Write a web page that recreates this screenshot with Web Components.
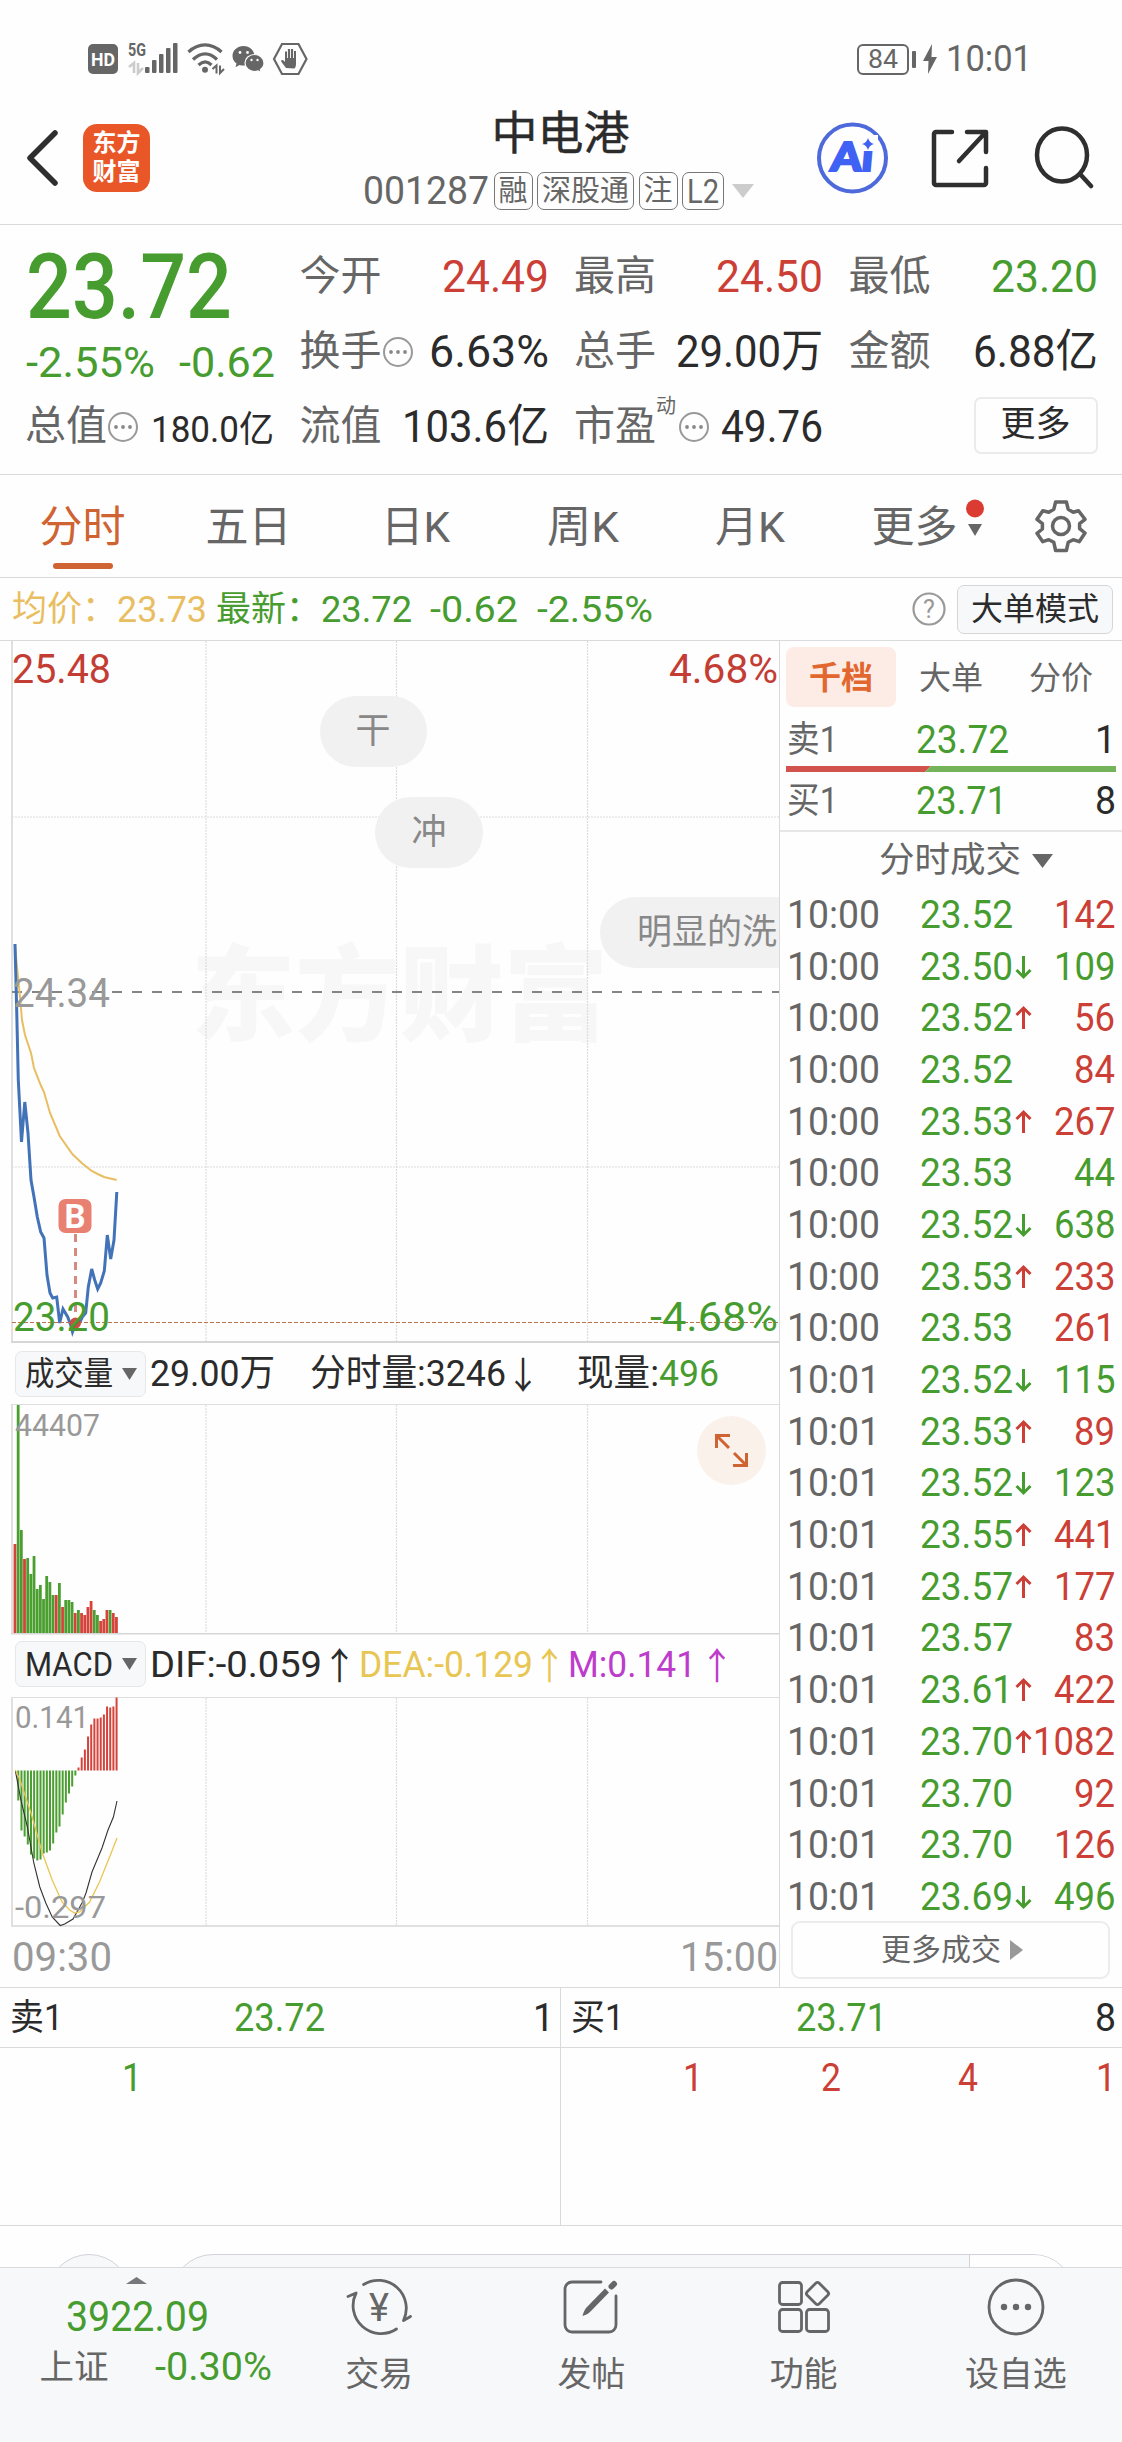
<!DOCTYPE html>
<html lang="zh-CN">
<head>
<meta charset="UTF-8">
<meta name="viewport" content="width=device-width, initial-scale=1">
<title>中电港 001287</title>
<style>
  :root {
    --up: #cb3f36;
    --down: #479c2f;
    --text: #2b2b2b;
    --muted: #666;
    --faint: #999;
    --brand: #cf6332;
    --avg: #e9be62;
    --line: #d9dadb;
    --panel: #f7f8fa;
  }
  body {
    margin: 0;
    width: 1122px;
    background: #fefefe;
    color: var(--text);
    font-family: Roboto, "Noto Sans CJK SC", sans-serif;
    line-height: 1;
  }
</style>
</head>
<body>
<stock-page></stock-page>

<script>
// Text squeezed to a fixed advance width, keeps the digits condensed
class FitText extends HTMLElement {
  connectedCallback() {
    if (this.shadowRoot) return;
    this.attachShadow({ mode: 'open' });
    this.shadowRoot.innerHTML = `
      <style>
        :host { display: inline-block; flex: none; white-space: nowrap; line-height: 1; }
        span { display: inline-block; transform-origin: 0 50%; }
      </style>
      <span><slot></slot></span>
    `;
    const target = Number(this.getAttribute('w'));
    const span = this.shadowRoot.querySelector('span');
    const natural = span.getBoundingClientRect().width;
    this.style.width = `${target}px`;
    if (natural) span.style.transform = `scaleX(${target / natural})`;
  }
}
customElements.define('fit-text', FitText);

// Shared base: every block only supplies its own template
class Block extends HTMLElement {
  connectedCallback() {
    if (this.shadowRoot) return;
    this.attachShadow({ mode: 'open' });
    this.shadowRoot.innerHTML = `
      <style>
        :host { display: block; box-sizing: border-box; }
        * { box-sizing: border-box; }
        svg { display: block; flex: none; }
        .up { color: var(--up); }
        .down { color: var(--down); }
      </style>
      ${this.render()}
    `;
  }
}

class MoreDot extends Block {
  render() {
    return `
      <style>:host { width: 30px; flex: none; }</style>
      <svg width="30" height="32" viewBox="0 0 30 32">
        <circle cx="15" cy="16" r="14" fill="none" stroke="#999" stroke-width="2"/>
        <g fill="#888"><circle cx="8" cy="16" r="1.9"/><circle cx="15" cy="16" r="1.9"/><circle cx="22" cy="16" r="1.9"/></g>
      </svg>
    `;
  }
}
customElements.define('more-dot', MoreDot);

class StatusBar extends Block {
  render() {
    return `
      <style>
        :host { height: 106px; padding: 38px 90px 0 84px; display: flex; justify-content: space-between; color: var(--muted); }
        .right { display: flex; align-items: center; height: 42px; }
        .battery { width: 52px; height: 31px; border: 2.5px solid #666; border-radius: 6px; display: grid; place-items: center; font-size: 26px; }
        .nub { width: 4px; height: 17px; background: #666; border-radius: 1px; margin: 0 7px 0 3px; }
        .time { font-size: 36px; margin-left: 9px; }
      </style>
      <svg width="230" height="42" viewBox="84 38 230 42" fill="#666">
        <rect x="88" y="44" width="30" height="30" rx="5"/>
        <text x="91" y="66" font-size="19" font-weight="700" fill="#fff" textLength="24" lengthAdjust="spacingAndGlyphs">HD</text>
        <text x="128" y="56" font-size="18" font-weight="700" textLength="18" lengthAdjust="spacingAndGlyphs">5G</text>
        <path d="M129 67l5-4v10M138 63v10l5-5" fill="none" stroke="#ccc" stroke-width="2.6"/>
        <g><rect x="145" y="67" width="4.5" height="6" rx="1"/><rect x="152" y="60" width="4.5" height="13" rx="1"/><rect x="159" y="54" width="4.5" height="19" rx="1"/><rect x="166" y="48" width="4.5" height="25" rx="1"/><rect x="173" y="43" width="4.5" height="30" rx="1"/></g>
        <g fill="none" stroke="#666" stroke-width="3.2"><path d="M188.500 52c10-9.500 23-9.500 33 0"/><path d="M193 59.500c8-7.500 16.500-7.500 24 0"/><path d="M198.500 65c4.500-4 9-4 13 0"/></g>
        <circle cx="205" cy="69.700" r="3"/>
        <path d="M212.500 69l4-3.500v8M220 65.500v7.500l4-4" fill="none" stroke="#666" stroke-width="2"/>
        <path d="M243.500 46c-6.200 0-11 4.400-11 10 0 3.200 1.500 5.800 4 7.600l-1 3.600 4-2.200c1.300.4 2.600.6 4 .6 6.300 0 11-4.300 11-9.600S249.800 46 243.500 46z"/>
        <path d="M254.500 54.500c-5.300 0-9.500 3.800-9.500 8.500s4.200 8.500 9.500 8.500c1.300 0 2.400-.2 3.500-.6l3.300 1.600-.9-3c2.300-1.600 3.600-3.900 3.600-6.500 0-4.700-4.200-8.500-9.500-8.500z" stroke="#fefefe" stroke-width="1.200"/>
        <g fill="#fefefe"><circle cx="240" cy="52.500" r="1.400"/><circle cx="247.500" cy="52.500" r="1.400"/><circle cx="251.500" cy="60" r="1.200"/><circle cx="257.500" cy="60" r="1.200"/></g>
        <path d="M274 59l8-15h16.500l8 15-8 15H282z" fill="none" stroke="#666" stroke-width="2.200"/>
        <path d="M286 68c-2-3-4-5-5-7 .6-1.500 2-1.200 4 1V51.500h2V58h.9v-9h2.200v9h.9v-9h2.100v9h.9v-7h2v13c0 2-.7 3.500-1.500 4.500z"/>
      </svg>
      <div class="right">
        <div class="battery"><fit-text w="30">84</fit-text></div>
        <div class="nub"></div>
        <svg width="14" height="30" viewBox="0 0 14 30" fill="#666"><path d="M9 0L0 17h5.500L5 30l9-17H8.500z"/></svg>
        <fit-text class="time" w="86">10:01</fit-text>
      </div>
    `;
  }
}
customElements.define('status-bar', StatusBar);

class QuoteHeader extends Block {
  render() {
    return `
      <style>
        :host { height: 119px; display: grid; grid-template-columns: 363px 390px 1fr; border-bottom: 1px solid var(--line); }
        .left, .right { display: flex; align-items: center; height: 104px; }
        .left { padding-left: 26px; }
        .logo { width: 67px; height: 68px; margin-left: 24px; border-radius: 14px; background: #e95728; color: #fff; display: grid; place-content: center; gap: 5px; font-size: 24px; font-weight: 700; line-height: 24px; padding-bottom: 1px; }
        h1 { margin: 2px 0 0 5px; font-size: 46px; line-height: 50px; font-weight: 400; text-align: center; -webkit-text-stroke: .4px currentColor; }
        .sub { display: flex; align-items: center; gap: 4.500px; margin-top: 14px; font-size: 38px; color: var(--muted); }
        .tag { height: 38px; border: 1px solid #777; border-radius: 7px; padding: 0 4px; display: flex; align-items: center; font-size: 29px; }
        .l2 { font-size: 33px; }
        .right { padding-left: 63px; }
        .share { margin: 0 45px 0 42px; }
      </style>
      <div class="left">
        <svg width="33" height="60" viewBox="0 0 33 60"><path d="M29 5L4 30l25 25" fill="none" stroke="#2f2f2f" stroke-width="5.500" stroke-linecap="round" stroke-linejoin="round"/></svg>
        <div class="logo"><span>东方</span><span>财富</span></div>
      </div>
      <div>
        <h1>中电港</h1>
        <div class="sub">
          <fit-text w="126">001287</fit-text>
          <span class="tag">融</span><span class="tag"><fit-text w="87">深股通</fit-text></span><span class="tag">注</span><span class="tag l2"><fit-text w="32">L2</fit-text></span>
          <svg width="25" height="16" viewBox="0 0 25 16"><path d="M3 1h22L14 15z" fill="#ccc"/></svg>
        </div>
      </div>
      <div class="right">
        <svg width="73" height="74" viewBox="0 0 73 74">
          <circle cx="36.500" cy="37" r="33.500" fill="none" stroke="#4d69dc" stroke-width="4"/>
          <g transform="translate(18 50) skewX(-5)">
            <text x="-4" y="0" font-family="Lato" font-size="40" font-weight="900" fill="#3f62f5" stroke="#3f62f5" stroke-width="2.200" textLength="42" lengthAdjust="spacingAndGlyphs">Ai</text>
          </g>
          <rect x="44" y="14" width="18" height="16" fill="#fefefe"/>
          <path d="M52 17q1.500 5 6 6-4.500 1-6 6-1.500-5-6-6 4.500-1 6-6z" fill="#3f62f5"/>
        </svg>
        <svg class="share" width="58" height="60" viewBox="0 0 58 60" fill="none" stroke="#2f2f2f" stroke-width="4.500" stroke-linecap="round" stroke-linejoin="round">
          <path d="M21 4H5a2 2 0 0 0-2 2v49a2 2 0 0 0 2 2h48a2 2 0 0 0 2-2V40"/>
          <path d="M36 4h19v20M54 5L28 33"/>
        </svg>
        <svg width="60" height="64" viewBox="0 0 60 64" fill="none" stroke="#2f2f2f" stroke-width="4.500" stroke-linecap="round">
          <ellipse cx="28" cy="29" rx="25" ry="26.500"/><path d="M46 48l11 12"/>
        </svg>
      </div>
    `;
  }
}
customElements.define('quote-header', QuoteHeader);

// label / value pair of the summary grid
class QuoteField extends Block {
  render() {
    const w = this.getAttribute('w');
    const dot = this.hasAttribute('dot') ? '<more-dot></more-dot>' : '';
    const sup = this.getAttribute('sup');
    return `
      <style>
        :host { display: flex; align-items: center; height: 75px; font-size: 45px; }
        .label { font-size: 41px; color: var(--muted); margin-left: -1px; }
        more-dot { margin-left: 1px; }
        sup { align-self: flex-start; font-size: 20px; line-height: 20px; margin: 7px 2px 0 0; color: var(--muted); }
        .value { margin-left: auto; }
      </style>
      <span class="label">${this.getAttribute('label')}</span>${sup ? `<sup>${sup}</sup>` : ''}${dot}
      <fit-text class="value" w="${w}"><slot></slot></fit-text>
    `;
  }
}
customElements.define('quote-field', QuoteField);

class QuoteSummary extends Block {
  render() {
    return `
      <style>
        :host { height: 250px; padding: 14px 25px 0 26px; display: grid; grid-template-columns: repeat(4, 248px); column-gap: 26.500px; grid-template-rows: repeat(3, 75px); border-bottom: 1px solid var(--line); }
        .price { grid-row: 1 / span 2; color: var(--down); }
        .big { font-size: 90px; font-weight: 500; margin-top: 4px; display: block; }
        .change { display: flex; justify-content: space-between; font-size: 42px; margin-top: 9px; width: 249px; }
        .small { font-size: 36px; }
        .more { justify-self: end; align-self: center; margin-top: -3px; width: 124px; height: 57px; border: 2px solid #ebebeb; border-radius: 7px; font-size: 35px; display: grid; place-items: center; }
        .more span { margin-top: -2px; }
      </style>
      <div class="price">
        <fit-text class="big" w="206">23.72</fit-text>
        <div class="change"><fit-text w="129">-2.55%</fit-text><fit-text w="96">-0.62</fit-text></div>
      </div>
      <quote-field label="今开" w="107" class="up">24.49</quote-field>
      <quote-field label="最高" w="107" class="up">24.50</quote-field>
      <quote-field label="最低" w="107" class="down">23.20</quote-field>
      <quote-field label="换手" w="120" dot>6.63%</quote-field>
      <quote-field label="总手" w="147">29.00万</quote-field>
      <quote-field label="金额" w="125">6.88亿</quote-field>
      <quote-field label="总值" w="123" dot><span class="small">180.0亿</span></quote-field>
      <quote-field label="流值" w="147">103.6亿</quote-field>
      <quote-field label="市盈" sup="动" w="102" dot>49.76</quote-field>
      <div class="more"><span>更多</span></div>
    `;
  }
}
customElements.define('quote-summary', QuoteSummary);

class PeriodTabs extends Block {
  render() {
    return `
      <style>
        :host { height: 103px; display: grid; grid-template-columns: 165px repeat(5, 167px) 1fr; border-bottom: 1px solid var(--line); font-size: 43px; color: var(--muted); }
        .tab { display: flex; justify-content: center; align-items: center; position: relative; padding-top: 3px; }
        .active { color: var(--brand); }
        .active::after { content: ''; position: absolute; left: 53px; bottom: 8px; width: 60px; height: 6px; border-radius: 3px; background: var(--brand); }
        .mark { margin: -19px 0 0 8px; }
        .more { padding-left: 22px; }
        .gear { padding: 0; }
      </style>
      <div class="tab active">分时</div>
      <div class="tab">五日</div>
      <div class="tab"><fit-text w="69">日K</fit-text></div>
      <div class="tab"><fit-text w="72">周K</fit-text></div>
      <div class="tab"><fit-text w="70">月K</fit-text></div>
      <div class="tab more">更多
        <svg class="mark" width="18" height="38" viewBox="0 0 18 38"><circle cx="9" cy="9.500" r="9" fill="#dc3b32"/><path d="M2 25h14L9 37z" fill="#666"/></svg>
      </div>
      <div class="tab gear">
        <svg width="54" height="54" viewBox="-27 -27 54 54" fill="none" stroke="#666" stroke-width="3.500" stroke-linejoin="round">
          <path d="M-5.400-24L5.400-24 7.200-16.700 12.200-13.700 17.500-15.300 24-6.700 18.600-2.300 18.600 2.700 24 7 18.200 15.700 12.200 13.700 7.200 16.300 5.400 24.500-5.400 24.500-7.200 16.300-12.200 13.700-18.200 15.700-24 7.300-18.600 3-18.600-2.300-24-6.700-18.200-15.300-12.200-13.700-7.200-16.700z"/>
          <circle r="8.500"/>
        </svg>
      </div>
    `;
  }
}
customElements.define('period-tabs', PeriodTabs);

class ChartInfo extends Block {
  render() {
    return `
      <style>
        :host { height: 63px; display: flex; align-items: center; padding: 0 9px 0 12px; border-bottom: 1px solid var(--line); font-size: 37px; color: var(--down); }
        .avg { color: var(--avg); }
        .gap { margin-right: 9px; }
        .cn { font-size: 35px; }
        .help { margin-left: auto; margin-right: 11px; }
        button { font: inherit; font-size: 32px; width: 156px; height: 49px; padding: 0; border: 1px solid #d5d6d8; border-radius: 7px; background: var(--panel); color: var(--text); }
      </style>
      <fit-text class="avg cn" w="105">均价：</fit-text><fit-text class="avg gap" w="90">23.73</fit-text>
      <fit-text class="cn" w="105">最新：</fit-text><fit-text w="91">23.72</fit-text>
      <fit-text w="88" style="margin-left:18px">-0.62</fit-text>
      <fit-text w="116" style="margin-left:19px">-2.55%</fit-text>
      <svg class="help" width="34" height="34" viewBox="0 0 34 34"><circle cx="17" cy="17" r="15.500" fill="none" stroke="#999" stroke-width="2.200"/><text x="17" y="26" font-size="25" text-anchor="middle" fill="#999">?</text></svg>
      <button>大单模式</button>
    `;
  }
}
customElements.define('chart-info', ChartInfo);

const GRID_X = [206, 396.5, 587.5];
const gridLines = (top, bottom) => GRID_X.map(x =>
  `<line x1="${x}" y1="${top}" x2="${x}" y2="${bottom}" stroke="#dcdcdc" stroke-width="1.2" stroke-dasharray="2 1"/>`).join('');

const PRICE = '15,944 16.7,1010 18.3,1080 21.5,1142 24.8,1102 28,1133 31,1180 34,1197 37.3,1217 40.7,1232 44,1238 47,1275 50,1293 52.7,1298 56.7,1297 59.7,1323 63,1309 67.7,1317 70.7,1325 72.5,1332 75,1325 80,1322 82.3,1317 85.7,1313 88.3,1287 91.7,1269 94.7,1280 97.7,1289 100.7,1283 104.3,1271 107.3,1235 110.7,1259 114,1240 116.8,1192';
const AVERAGE = '15,946 17.3,970 20,997 22,1020 25,1035 31,1053 34,1068 40.7,1085 44,1092 50,1113 56,1127 59.7,1136 72.3,1154 81.7,1163 91.7,1171 97.7,1174 104,1177 116.7,1180';

class PriceChart extends Block {
  render() {
    return `
      <svg width="779" height="702" viewBox="0 641 779 702" font-size="41">
        <text x="191" y="1033" font-size="104" font-weight="900" fill="#f7f7f7" textLength="417" lengthAdjust="spacingAndGlyphs">东方财富</text>
        ${gridLines(641, 1342)}
        <path d="M12 817H779M12 1167H779" stroke="#dcdcdc" stroke-width="1.200" stroke-dasharray="2 1"/>
        <path d="M12 641V1342" stroke="#e0e0e0" stroke-width="2"/>
        <path d="M11 1342H779" stroke="#d6d6d6" stroke-width="2"/>
        <path d="M12 992H779" stroke="#858585" stroke-width="2" stroke-dasharray="10 10"/>
        <polyline points="${AVERAGE}" fill="none" stroke="#e9be62" stroke-width="2"/>
        <polyline points="${PRICE}" fill="none" stroke="#4272b8" stroke-width="3"/>
        <path d="M12 1322.500H779" stroke="#b9744f" stroke-width="1.200" stroke-dasharray="4 2"/>
        <path d="M75.500 1234V1318" stroke="#d98a7e" stroke-width="3" stroke-dasharray="8 6"/>
        <circle cx="75.500" cy="1323" r="5.500" fill="#c94f42"/>
        <rect x="58.500" y="1199" width="33" height="34" rx="7" fill="#e98172"/>
        <text x="75" y="1228" font-size="33" font-weight="700" fill="#fff" text-anchor="middle">B</text>
        <g fill="#f1f1f1"><rect x="320" y="696" width="107" height="71" rx="35.500"/><rect x="375" y="797" width="108" height="71" rx="35.500"/><rect x="600" y="897" width="220" height="71" rx="35.500"/></g>
        <g fill="#888" font-size="35"><text x="373" y="743" text-anchor="middle">干</text><text x="429" y="844" text-anchor="middle">冲</text><text x="637" y="944">明显的洗</text></g>
        <text x="12" y="683" fill="#c43d34" textLength="99" lengthAdjust="spacingAndGlyphs">25.48</text>
        <text x="669" y="683" fill="#c43d34" textLength="109" lengthAdjust="spacingAndGlyphs">4.68%</text>
        <text x="13" y="1006.500" fill="#999" textLength="97" lengthAdjust="spacingAndGlyphs">24.34</text>
        <text x="13" y="1330.500" fill="#479c2f" textLength="97" lengthAdjust="spacingAndGlyphs">23.20</text>
        <text x="650" y="1331" fill="#479c2f" textLength="128" lengthAdjust="spacingAndGlyphs">-4.68%</text>
      </svg>
    `;
  }
}
customElements.define('price-chart', PriceChart);

class IndicatorBar extends Block {
  render() {
    return `
      <style>
        :host { display: flex; align-items: center; height: 61px; padding-left: 15px; font-size: 37px; }
        .select { width: 131px; height: 46px; flex: none; border: 1.5px solid #e6e7ea; border-radius: 7px; background: var(--panel); display: flex; align-items: center; padding-left: 9px; font-size: 33px; }
        svg { margin-left: 9px; }
      </style>
      <div class="select"><fit-text w="88">${this.getAttribute('name')}</fit-text><svg width="15" height="12" viewBox="0 0 15 12"><path d="M0 0h15L7.500 12z" fill="#666"/></svg></div>
      <slot></slot>
    `;
  }
}
customElements.define('indicator-bar', IndicatorBar);

// [height, r = up / g = down], one bar per minute
const VOLUME = [
  [89, 'r'], [228, 'g'], [103, 'g'], [74, 'r'], [75, 'g'], [59, 'g'], [77, 'g'], [44, 'g'], [48, 'g'], [34, 'g'], [57, 'g'],
  [51, 'g'], [38, 'g'], [38, 'r'], [50, 'g'], [26, 'r'], [33, 'g'], [33, 'g'], [31, 'g'], [20, 'r'], [23, 'g'], [20, 'r'],
  [18, 'r'], [26, 'r'], [32, 'r'], [23, 'g'], [18, 'g'], [12, 'r'], [14, 'r'], [23, 'r'], [23, 'g'], [20, 'r'], [16, 'r']
];
const COLORS = { r: '#d5443b', g: '#4a9f30' };

class VolumeChart extends Block {
  render() {
    const bars = VOLUME.map(([h, c], i) =>
      `<rect x="${(13.6 + i * 3.17).toFixed(2)}" y="${1633 - h}" width="2.8" height="${h}" fill="${COLORS[c]}"/>`).join('');
    return `
      <svg width="779" height="231" viewBox="0 1404 779 231">
        ${gridLines(1405, 1633)}
        <path d="M12 1404.500H779" stroke="#dedede"/>
        <path d="M12 1404V1634" stroke="#e0e0e0" stroke-width="2"/>
        <path d="M11 1633.700H779" stroke="#d6d6d6" stroke-width="1.500"/>
        ${bars}
        <text x="15" y="1436" font-size="31" fill="#999" textLength="85" lengthAdjust="spacingAndGlyphs">44407</text>
        <circle cx="731.500" cy="1450.500" r="34.500" fill="#fbf1eb"/>
        <g fill="none" stroke="#cf6332" stroke-width="3"><path d="M716.500 1448V1435.500H730M717 1436l12 12"/><path d="M746.500 1453v12.500H733M746 1465l-12-12"/></g>
      </svg>
    `;
  }
}
customElements.define('volume-chart', VolumeChart);

const MACD = [-30, -60, -66, -74, -84, -88, -90, -89, -83, -82, -80, -73, -62, -56, -44, -32, -23, -16, -5,
  3, 13, 21, 34, 46, 52, 52, 53, 56, 64, 63, 64, 73];
const DIF = '15.4,1771 20.9,1800 27.4,1827 33.8,1863 39.8,1887 45.8,1903 52.2,1917 60.2,1925.5 64.7,1924 73,1919 82,1903 86,1893 92,1872 102,1848 108,1830 113.4,1817 117,1801';
const DEA = '15.4,1770 20,1780 31,1813 42.3,1853 52.2,1880 62,1902 69.7,1910 74.6,1913 79.6,1912 89.6,1902 99.5,1882 110.4,1855 117,1838';

class MacdChart extends Block {
  render() {
    const bars = MACD.map((v, i) =>
      `<rect x="${(17.3 + i * 3.17).toFixed(2)}" y="${v > 0 ? 1770.5 - v : 1770.5}" width="2" height="${Math.abs(v)}" fill="${COLORS[v > 0 ? 'r' : 'g']}"/>`).join('');
    return `
      <svg width="779" height="231" viewBox="0 1697 779 231">
        ${gridLines(1698, 1926)}
        <path d="M12 1697.500H779" stroke="#dedede"/>
        <path d="M12 1697V1927" stroke="#e0e0e0" stroke-width="2"/>
        <path d="M11 1926H779" stroke="#e0e0e0" stroke-width="2"/>
        ${bars}
        <polyline points="${DIF}" fill="none" stroke="#333" stroke-width="1.100"/>
        <polyline points="${DEA}" fill="none" stroke="#e8c653" stroke-width="1.300"/>
        <text x="15" y="1728" font-size="31" fill="#999" textLength="74" lengthAdjust="spacingAndGlyphs">0.141</text>
        <text x="15" y="1918" font-size="31" fill="#999" textLength="91" lengthAdjust="spacingAndGlyphs">-0.297</text>
      </svg>
    `;
  }
}
customElements.define('macd-chart', MacdChart);

class ChartPanel extends Block {
  render() {
    return `
      <style>
        :host { border-right: 1px solid var(--line); }
        .macd { height: 62px; padding-bottom: 4px; }
        .axis { height: 59px; padding: 0 1px 0 12px; display: flex; align-items: center; justify-content: space-between; font-size: 41px; color: var(--faint); }
        .arrow { font-family: "Noto Sans CJK SC"; font-size: 37px; }
      </style>
      <price-chart></price-chart>
      <indicator-bar name="成交量">
        <fit-text w="125" style="margin-left:4px">29.00万</fit-text>
        <fit-text w="196" style="margin-left:35px">分时量:3246</fit-text><fit-text class="arrow" w="34">↓</fit-text>
        <fit-text w="82" style="margin-left:37px">现量:</fit-text><fit-text class="down" w="60">496</fit-text>
      </indicator-bar>
      <volume-chart></volume-chart>
      <indicator-bar class="macd" name="MACD">
        <fit-text w="172" style="margin-left:4px">DIF:-0.059</fit-text><fit-text class="arrow" w="35">↑</fit-text>
        <fit-text w="174" style="margin-left:2px;color:#e8c653">DEA:-0.129</fit-text><fit-text class="arrow" w="33" style="color:#e8c653">↑</fit-text>
        <fit-text w="128" style="margin-left:2px;color:#bd3ccb">M:0.141</fit-text><fit-text class="arrow" w="34" style="margin-left:4px;color:#bd3ccb">↑</fit-text>
      </indicator-bar>
      <macd-chart></macd-chart>
      <div class="axis"><fit-text w="100">09:30</fit-text><fit-text w="98">15:00</fit-text></div>
    `;
  }
}
customElements.define('chart-panel', ChartPanel);

// time, price, arrow (u / d / none), volume, volume colour
const TICKS = [
  ['10:00', '23.52', '', '142', 'up'], ['10:00', '23.50', 'd', '109', 'down'], ['10:00', '23.52', 'u', '56', 'up'],
  ['10:00', '23.52', '', '84', 'up'], ['10:00', '23.53', 'u', '267', 'up'], ['10:00', '23.53', '', '44', 'down'],
  ['10:00', '23.52', 'd', '638', 'down'], ['10:00', '23.53', 'u', '233', 'up'], ['10:00', '23.53', '', '261', 'up'],
  ['10:01', '23.52', 'd', '115', 'down'], ['10:01', '23.53', 'u', '89', 'up'], ['10:01', '23.52', 'd', '123', 'down'],
  ['10:01', '23.55', 'u', '441', 'up'], ['10:01', '23.57', 'u', '177', 'up'], ['10:01', '23.57', '', '83', 'up'],
  ['10:01', '23.61', 'u', '422', 'up'], ['10:01', '23.70', 'u', '1082', 'up'], ['10:01', '23.70', '', '92', 'up'],
  ['10:01', '23.70', '', '126', 'up'], ['10:01', '23.69', 'd', '496', 'down']
];
const ARROWS = {
  u: '<svg class="up" width="19" height="26" viewBox="0 0 19 26"><path d="M9.500 24V3M2.500 10l7-7 7 7"/></svg>',
  d: '<svg class="down" width="19" height="26" viewBox="0 0 19 26"><path d="M9.500 2v21M2.500 16l7 7 7-7"/></svg>'
};

class TickList extends Block {
  render() {
    return `
      <style>
        :host { padding-top: 2px; margin-bottom: -2px; }
        .row { display: grid; grid-template-columns: 133px 94px 19px 1fr; align-items: center; height: 51.7px; padding: 0 7px 0 7px; font-size: 38px; }
        .time { color: var(--muted); }
        .vol { justify-self: end; }
        svg { fill: none; stroke: currentColor; stroke-width: 3; }
      </style>
      ${TICKS.map(([time, price, dir, vol, tone]) => `
        <div class="row">
          <fit-text class="time" w="93">${time}</fit-text>
          <fit-text class="down" w="93">${price}</fit-text>
          <span>${ARROWS[dir] || ''}</span>
          <fit-text class="vol ${tone}" w="${vol.length * 20.5}">${vol}</fit-text>
        </div>`).join('')}
    `;
  }
}
customElements.define('tick-list', TickList);

class OrderSide extends Block {
  render() {
    return `
      <style>
        .tabs { display: grid; grid-template-columns: repeat(3, 110px); height: 72px; padding: 6px 0 6px 6px; font-size: 32px; color: var(--muted); }
        .tabs span { display: grid; place-items: center; border-radius: 8px; padding-top: 2px; }
        .tabs .active { background: #fcece5; color: #e2672f; font-weight: 700; }
        .row { display: grid; grid-template-columns: 129px 1fr auto; align-items: center; height: 53px; padding: 0 6px 0 7px; font-size: 38px; }
        .row.buy { height: 58px; }
        .name { color: var(--muted); font-size: 36px; }
        .ratio { display: block; margin-left: 6px; }
        .title { display: flex; align-items: center; justify-content: center; gap: 11px; height: 57px; padding-left: 35px; padding-right: 5px; padding-top: 2px; border-top: 2px solid #e7e7e7; font-size: 35.500px; color: var(--muted); }
        .more { width: 319px; height: 58px; margin-left: 11px; border: 2px solid #ececec; border-radius: 9px; display: flex; align-items: center; justify-content: center; gap: 9px; font-size: 30px; color: var(--muted); padding-left: 3px; }
      </style>
      <div class="tabs"><span class="active">千档</span><span>大单</span><span>分价</span></div>
      <div class="row"><fit-text class="name" w="51">卖1</fit-text><fit-text class="down" w="93">23.72</fit-text><fit-text w="21">1</fit-text></div>
      <svg class="ratio" width="330" height="6" viewBox="0 0 330 6"><path d="M0 0h145l-6 6H0z" fill="#d2534d"/><path d="M145 0h185v6H139z" fill="#74b35a"/></svg>
      <div class="row buy"><fit-text class="name" w="51">买1</fit-text><fit-text class="down" w="91">23.71</fit-text><fit-text w="21">8</fit-text></div>
      <div class="title">分时成交<svg width="21" height="14" viewBox="0 0 21 14"><path d="M0 0h21L10.500 14z" fill="#666"/></svg></div>
      <tick-list></tick-list>
      <div class="more"><span>更多成交</span><svg width="13" height="20" viewBox="0 0 13 20"><path d="M0 0l13 10L0 20z" fill="#999"/></svg></div>
    `;
  }
}
customElements.define('order-side', OrderSide);

class QueueColumn extends Block {
  render() {
    const cells = (this.getAttribute('cells') || '').split(',');
    return `
      <style>
        .head { display: grid; grid-template-columns: 1fr 1fr 1fr; align-items: center; height: 60px; padding: 0 6px 0 10px; border-bottom: 1px solid var(--line); font-size: 38px; }
        .price { justify-self: center; margin-left: -4px; }
        .qty { justify-self: end; }
        .name { font-size: 36px; }
        .cells { display: grid; grid-template-columns: 142px repeat(3, 137.700px); height: 178px; padding-top: 11px; font-size: 38px; color: var(--cell, var(--up)); }
        .cells fit-text { justify-self: end; }
      </style>
      <div class="head">
        <fit-text class="name" w="53">${this.getAttribute('name')}</fit-text>
        <fit-text class="price down" w="91">${this.getAttribute('price')}</fit-text>
        <fit-text class="qty" w="21">${this.getAttribute('qty')}</fit-text>
      </div>
      <div class="cells">${cells.map(c => `<fit-text w="20">${c}</fit-text>`).join('')}</div>
    `;
  }
}
customElements.define('queue-column', QueueColumn);

class DepthQueue extends Block {
  render() {
    return `
      <style>
        :host { display: grid; grid-template-columns: 561px 561px; border-top: 1px solid var(--line); border-bottom: 1px solid var(--line); height: 239px; }
        .sell { --cell: var(--down); border-right: 1px solid var(--line); }
      </style>
      <queue-column class="sell" name="卖1" price="23.72" qty="1" cells="1"></queue-column>
      <queue-column name="买1" price="23.71" qty="8" cells="1,2,4,1"></queue-column>
    `;
  }
}
customElements.define('depth-queue', DepthQueue);

// top edge of the comment strip that scrolls under the nav
class CommentStrip extends Block {
  render() {
    return `
      <style>
        :host { height: 41px; overflow: hidden; padding: 28px 45px 0 47px; display: flex; gap: 40px; }
        .avatar, .pill { flex: none; height: 84px; border: 1px solid #d2d3d8; background: var(--panel); border-radius: 42px; }
        .avatar { width: 84px; }
        .pill { width: 904px; display: flex; justify-content: flex-end; overflow: hidden; }
        .pill i { width: 105px; background: #fefefe; border-left: 1px solid #d2d3d8; }
      </style>
      <div class="avatar"></div>
      <div class="pill"><i></i></div>
    `;
  }
}
customElements.define('comment-strip', CommentStrip);

class NavItem extends Block {
  render() {
    return `
      <style>
        :host { display: flex; flex-direction: column; align-items: center; padding-top: 7px; font-size: 34px; color: var(--muted); }
        ::slotted(svg) { display: block; margin-bottom: 18px; overflow: visible; fill: none; stroke: #666; stroke-width: 2.8; stroke-linecap: round; stroke-linejoin: round; }
      </style>
      <slot></slot>
      <span>${this.getAttribute('label')}</span>
    `;
  }
}
customElements.define('nav-item', NavItem);

class BottomNav extends Block {
  render() {
    return `
      <style>
        :host { height: 175px; display: grid; grid-template-columns: 273px repeat(4, 212.250px); background: var(--panel); border-top: 1px solid var(--line); }
        .index { display: flex; flex-direction: column; align-items: center; padding-top: 9px; }
        .value { font-size: 42px; margin: 12px 0 0 2px; }
        .line { display: flex; justify-content: space-between; align-items: center; width: 232px; margin: 10px 0 0 38px; font-size: 38px; }
        .name { font-size: 34.500px; color: var(--muted); }
      </style>
      <div class="index">
        <svg width="21" height="7" viewBox="0 0 21 7"><path d="M0 7L10.500 0 21 7z" fill="#77787c"/></svg>
        <fit-text class="value down" w="143">3922.09</fit-text>
        <div class="line"><span class="name">上证</span><fit-text class="down" w="117">-0.30%</fit-text></div>
      </div>
      <nav-item label="交易">
        <svg width="64" height="64" viewBox="-32 -32 64 64">
          <path d="M-15.400-22.500A28 28 0 0 1 24.500 13.500L31.500 9.500M17.500 22A28 28 0 0 1-22.900-14L-31-10.500"/>
          <text y="14" font-size="38" text-anchor="middle" fill="#666" stroke="none">¥</text>
        </svg>
      </nav-item>
      <nav-item label="发帖">
        <svg width="64" height="64" viewBox="-32 -32 64 64">
          <path d="M10-25H-19a7 7 0 0 0-7 7V18a7 7 0 0 0 7 7H18a7 7 0 0 0 7-7V-11"/>
          <path d="M-8.500 9C-7 4-6 2-4 0L14-18.500l4 4L0 4C-2 6-4.500 8-8.500 9z" fill="#666" stroke="none"/>
          <path d="M20.500-20.500l2.500-2.500" stroke-width="6"/>
        </svg>
      </nav-item>
      <nav-item label="功能">
        <svg width="64" height="64" viewBox="-32 -32 64 64">
          <rect x="-24.500" y="-24.500" width="22" height="22" rx="3"/><rect x="-24.500" y="2.500" width="22" height="22" rx="3"/><rect x="2.500" y="2.500" width="22" height="22" rx="3"/>
          <rect x="5" y="-22" width="17" height="17" rx="2.500" transform="rotate(45 13.500 -13.500)"/>
        </svg>
      </nav-item>
      <nav-item label="设自选">
        <svg width="64" height="64" viewBox="-32 -32 64 64">
          <circle r="27"/>
          <g fill="#666" stroke="none"><circle cx="-12" r="3.200"/><circle r="3.200"/><circle cx="12" r="3.200"/></g>
        </svg>
      </nav-item>
    `;
  }
}
customElements.define('bottom-nav', BottomNav);

class StockPage extends Block {
  render() {
    return `
      <style>
        :host { width: 1122px; height: 2442px; overflow: hidden; }
        .main { display: grid; grid-template-columns: 780px 342px; height: 1346px; }
      </style>
      <status-bar></status-bar>
      <quote-header></quote-header>
      <quote-summary></quote-summary>
      <period-tabs></period-tabs>
      <chart-info></chart-info>
      <div class="main"><chart-panel></chart-panel><order-side></order-side></div>
      <depth-queue></depth-queue>
      <comment-strip></comment-strip>
      <bottom-nav></bottom-nav>
    `;
  }
}
customElements.define('stock-page', StockPage);
</script>
</body>
</html>
